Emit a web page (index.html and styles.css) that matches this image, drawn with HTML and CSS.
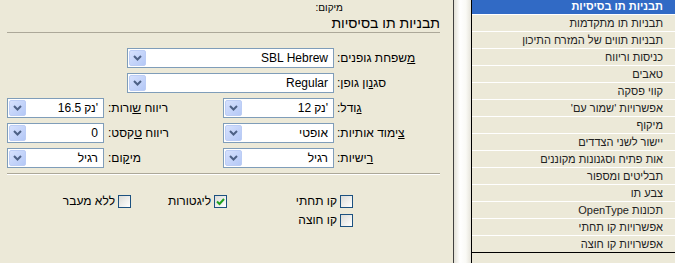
FILE: index.html
```html
<!DOCTYPE html>
<html lang="he" dir="rtl">
<head>
    <meta charset="UTF-8">
    <title>תבניות תו בסיסיות</title>
    <link rel="stylesheet" href="styles.css">
</head>
<body>
<div class="window">
    <ul class="list">
        <li class="selected">תבניות תו בסיסיות</li>
        <li>תבניות תו מתקדמות</li>
        <li>תבניות תווים של המזרח התיכון</li>
        <li>כניסות וריווח</li>
        <li>טאבים</li>
        <li>קווי פסקה</li>
        <li>אפשרויות 'שמור עם'</li>
        <li>מיקוף</li>
        <li>יישור לשני הצדדים</li>
        <li>אות פתיח וסגנונות מקוננים</li>
        <li>תבליטים ומספור</li>
        <li>צבע תו</li>
        <li>תכונות OpenType</li>
        <li>אפשרויות קו תחתי</li>
        <li>אפשרויות קו חוצה</li>
    </ul>
    <div class="splitter"></div>
    <div class="panel">
        <div class="header">
            <div class="loc-label">מיקום:</div>
            <div class="loc-title">תבניות תו בסיסיות</div>
        </div>
        <div class="form">
            <div class="row">
                <label class="lbl"><u>מ</u>שפחת גופנים:</label>
                <div class="combo wide">
                    <span class="val">SBL Hebrew</span>
                    <span class="btn"><svg width="9" height="6" viewBox="0 0 9 6"><path d="M1 1 L4.5 4.5 L8 1" fill="none" stroke="#4d6185" stroke-width="2"/></svg></span>
                </div>
            </div>
            <div class="row">
                <label class="lbl">סג<u>נ</u>ון גופן:</label>
                <div class="combo wide">
                    <span class="val">Regular</span>
                    <span class="btn"><svg width="9" height="6" viewBox="0 0 9 6"><path d="M1 1 L4.5 4.5 L8 1" fill="none" stroke="#4d6185" stroke-width="2"/></svg></span>
                </div>
            </div>
            <div class="row">
                <label class="lbl"><u>ג</u>ודל:</label>
                <div class="combo mid">
                    <span class="val pt"><span>12</span><span>נק</span><span>'</span></span>
                    <span class="btn"><svg width="9" height="6" viewBox="0 0 9 6"><path d="M1 1 L4.5 4.5 L8 1" fill="none" stroke="#4d6185" stroke-width="2"/></svg></span>
                </div>
                <div class="group">
                    <label class="lbl2">ריווח <u>ש</u>ורות:</label>
                    <div class="combo small">
                        <span class="val pt"><span>16.5</span><span>נק</span><span>'</span></span>
                        <span class="btn"><svg width="9" height="6" viewBox="0 0 9 6"><path d="M1 1 L4.5 4.5 L8 1" fill="none" stroke="#4d6185" stroke-width="2"/></svg></span>
                    </div>
                </div>
            </div>
            <div class="row">
                <label class="lbl"><u>צ</u>ימוד אותיות:</label>
                <div class="combo mid">
                    <span class="val">אופטי</span>
                    <span class="btn"><svg width="9" height="6" viewBox="0 0 9 6"><path d="M1 1 L4.5 4.5 L8 1" fill="none" stroke="#4d6185" stroke-width="2"/></svg></span>
                </div>
                <div class="group">
                    <label class="lbl2">ריווח <u>ט</u>קסט:</label>
                    <div class="combo small">
                        <span class="val">0</span>
                        <span class="btn"><svg width="9" height="6" viewBox="0 0 9 6"><path d="M1 1 L4.5 4.5 L8 1" fill="none" stroke="#4d6185" stroke-width="2"/></svg></span>
                    </div>
                </div>
            </div>
            <div class="row">
                <label class="lbl"><u>ר</u>ישיות:</label>
                <div class="combo mid">
                    <span class="val">רגיל</span>
                    <span class="btn"><svg width="9" height="6" viewBox="0 0 9 6"><path d="M1 1 L4.5 4.5 L8 1" fill="none" stroke="#4d6185" stroke-width="2"/></svg></span>
                </div>
                <div class="group">
                    <label class="lbl2">מי<u>ק</u>ום:</label>
                    <div class="combo small">
                        <span class="val">רגיל</span>
                        <span class="btn"><svg width="9" height="6" viewBox="0 0 9 6"><path d="M1 1 L4.5 4.5 L8 1" fill="none" stroke="#4d6185" stroke-width="2"/></svg></span>
                    </div>
                </div>
            </div>
        </div>
        <div class="sep"></div>
        <div class="checks">
            <div class="check-row">
                <div class="check c1"><span class="box"></span><span>קו תחתי</span></div>
                <div class="check c2"><span class="box"><svg width="11" height="11" viewBox="0 0 11 11"><path d="M2 5.5 L4.5 8 L9 3" fill="none" stroke="#21a121" stroke-width="2"/></svg></span><span>ליגטורות</span></div>
                <div class="check"><span class="box"></span><span>ללא מעבר</span></div>
            </div>
            <div class="check-row">
                <div class="check c1"><span class="box"></span><span>קו חוצה</span></div>
            </div>
        </div>
    </div>
</div>
</body>
</html>
```

FILE: styles.css
```css
body {
    margin: 0;
    background: #ece9d8;
    font-family: "Liberation Sans", "DejaVu Sans", sans-serif;
    font-size: 12px;
    color: #000;
    direction: rtl;
}
.window {
    display: flex;
    width: 675px;
    height: 263px;
    overflow: hidden;
}
.list {
    flex: none;
    width: 203px;
    margin: -2px 0 0;
    padding: 0;
    list-style: none;
}
.list li {
    height: 16px;
    line-height: 16px;
    padding-right: 12px;
    border-bottom: 1px solid #fff;
    font-size: 11px;
    color: #222;
    white-space: nowrap;
    overflow: hidden;
}
.list li.selected {
    background: #316ac5;
    color: #fff;
    font-weight: bold;
}
.list li:last-child {
    border-bottom-color: #000;
}
.splitter {
    flex: none;
    width: 17px;
    border-left: 1px solid #404040;
    border-right: 1px solid #000;
    background: linear-gradient(to right, #e2e0d6, #fff 35%, #fafaf6 70%, #e6e4da);
}
.panel {
    flex: none;
    width: 453px;
    padding: 0 13px 0 7px;
    box-sizing: border-box;
}
.header {
    border-bottom: 1px solid #aca899;
}
.loc-label {
    height: 15px;
    line-height: 15px;
    font-size: 10px;
    padding-right: 97px;
}
.loc-title {
    height: 17px;
    line-height: 17px;
    font-size: 14px;
}
.form {
    margin-top: 15px;
}
.row {
    display: flex;
    align-items: center;
    height: 20px;
    margin-bottom: 5px;
}
.lbl {
    flex: none;
    width: 103px;
    margin-left: 3px;
    text-align: left;
}
.group {
    display: flex;
    align-items: center;
    margin-right: auto;
}
.lbl2 {
    margin-left: 4px;
}
.combo {
    display: flex;
    height: 20px;
    box-sizing: border-box;
    border: 1px solid #7f9db9;
    background: #fff;
}
.combo.wide {
    width: 207px;
}
.combo.mid {
    width: 111px;
}
.combo.small {
    width: 97px;
}
.val {
    flex: 1;
    padding: 0 5px;
    line-height: 18px;
    text-align: right;
    white-space: nowrap;
}
.val.pt {
    display: flex;
    direction: ltr;
    justify-content: flex-end;
    gap: 3px;
}
.val.pt span:last-child {
    margin-left: -3px;
}
.btn {
    display: flex;
    align-items: center;
    justify-content: center;
    width: 15px;
    margin: 1px;
    border: 1px solid #bccdf5;
    border-radius: 2px;
    background: linear-gradient(135deg, #d6e1fd, #b4c8f6);
}
.sep {
    margin-top: 3px;
    border-top: 1px solid #aca899;
    border-bottom: 1px solid #fff;
}
.checks {
    margin-top: 20px;
    padding-right: 87px;
}
.check-row {
    display: flex;
    height: 13px;
    margin-bottom: 6px;
}
.check {
    display: flex;
    align-items: center;
    gap: 3px;
    height: 13px;
    line-height: 13px;
}
.check.c1 {
    width: 126px;
}
.check.c2 {
    width: 96px;
}
.box {
    display: flex;
    align-items: center;
    justify-content: center;
    width: 13px;
    height: 13px;
    box-sizing: border-box;
    border: 1px solid #1c5180;
    background: linear-gradient(135deg, #dcdcd7, #fff);
}
```
